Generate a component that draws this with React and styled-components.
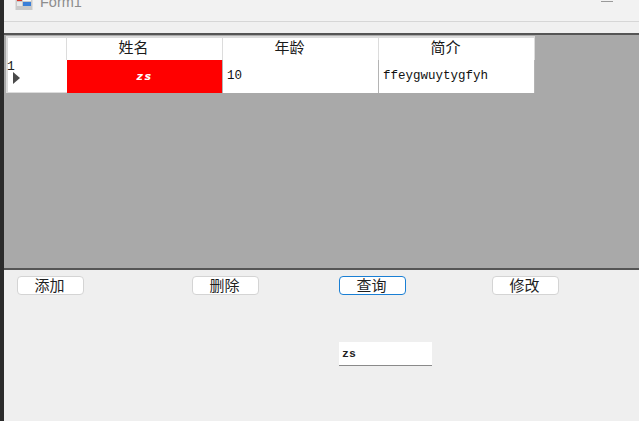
import styled, { createGlobalStyle } from "styled-components";

const GlobalStyle = createGlobalStyle`
  html, body {
    margin: 0;
    padding: 0;
    height: 100%;
    overflow: hidden;
    background: #efefef;
  }
`;

const cjk = `"Noto Sans CJK SC", "Liberation Sans", sans-serif`;
const mono = `"Liberation Mono", "DejaVu Sans Mono", monospace`;

const Desktop = styled.div`
  display: flex;
  width: 639px;
  height: 421px;
  overflow: hidden;
`;

const Edge = styled.div`
  width: 4px;
  background: #2b2b2b;
  flex-shrink: 0;
`;

const Window = styled.div`
  flex: 1;
  display: flex;
  flex-direction: column;
  min-width: 0;
`;

const TitleBar = styled.div`
  height: 21px;
  flex-shrink: 0;
  background: #f2f2f2;
  border-bottom: 1px solid #d6d6d6;
  display: flex;
  justify-content: space-between;
  align-items: flex-start;
  overflow: hidden;
`;

const TitleLeft = styled.div`
  display: flex;
  align-items: flex-end;
  height: 10px;
  padding-left: 11px;
  gap: 7px;
`;

const TitleText = styled.span`
  font: 14.5px "Liberation Sans", Arial, sans-serif;
  line-height: 16px;
  color: #8d8d8d;
  flex-shrink: 0;
`;

const Minimize = styled.div`
  width: 12px;
  height: 1px;
  background: #9a9a9a;
  margin: 1px 26px 0 0;
`;

const MenuBand = styled.div`
  height: 11px;
  flex-shrink: 0;
  background: #f0f0f0;
`;

const GridPanel = styled.div`
  height: 232px;
  flex-shrink: 0;
  background: #a9a9a9;
  border-top: 2px solid #555;
  border-bottom: 2px solid #555;
  padding: 1px 0 0 2px;
  box-sizing: content-box;
`;

const Table = styled.div`
  display: grid;
  grid-template-columns: 61px 156px 156px 156px;
  grid-template-rows: 24px 33px;
  width: 529px;
`;

const HeadCell = styled.div`
  background: #fff;
  border-top: 2px solid #dcdcdc;
  border-right: 1px solid #dcdcdc;
  border-left: ${(p) => (p.$first ? "2px solid #dcdcdc" : "none")};
  box-sizing: border-box;
  padding-right: ${(p) => (p.$first ? "0" : "22px")};
  font: 15px/18px ${cjk};
  color: #1a1a1a;
  text-align: center;
`;

const HeadGroup = styled.div`
  grid-column: span 2;
  display: grid;
  grid-template-columns: 61px 156px;
`;

const RowHead = styled.div`
  background: #fff;
  position: relative;
  border-left: 2px solid #dcdcdc;
  border-bottom: 1px solid #dcdcdc;
  box-sizing: border-box;
  font: 13px/14px ${mono};
  color: #222;
`;

const RowIndex = styled.span`
  position: absolute;
  left: -1px;
  top: 0;
`;

const RowArrow = styled.svg`
  position: absolute;
  left: 5px;
  top: 12px;
`;

const Cell = styled.div`
  background: ${(p) => (p.$selected ? "#ff0000" : "#fff")};
  border-right: 1px solid #b4b4b4;
  box-sizing: border-box;
  display: flex;
  align-items: center;
  justify-content: ${(p) => (p.$selected ? "center" : "flex-start")};
  padding: 0 0 1px ${(p) => (p.$selected ? "0" : "4px")};
  font: ${(p) =>
    p.$selected
      ? `italic bold 11px "DejaVu Sans", sans-serif`
      : `12.5px "Liberation Mono", monospace`};
  letter-spacing: ${(p) => (p.$selected ? "1.5px" : "0")};
  color: ${(p) => (p.$selected ? "#fff" : "#111")};
`;

const ButtonRow = styled.div`
  display: flex;
  padding: 6px 0 0 13px;
`;

const ActionButton = styled.button`
  width: 67px;
  height: 19px;
  margin-left: ${(p) => p.$offset || 0}px;
  padding: 0 2px 2px 0;
  background: #fff;
  border: ${(p) => (p.$focused ? "1.5px solid #1a7fd4" : "1px solid #d4d4d4")};
  border-radius: 4px;
  box-sizing: border-box;
  font: 15px/15px ${cjk};
  color: #1f1f1f;
`;

const SearchRow = styled.div`
  padding: 47px 0 0 335px;
`;

const SearchBox = styled.input`
  display: block;
  width: 93px;
  height: 24px;
  padding: 0 0 0 3px;
  background: #fff;
  border: none;
  border-bottom: 1px solid #8a8a8a;
  box-sizing: border-box;
  font: bold 11.5px ${mono};
  color: #222;
  outline: none;
`;

const FormIcon = () => (
  <svg width="18" height="18" viewBox="0 0 18 18" style={{ flexShrink: 0 }}>
    <rect x="0.5" y="0" width="17" height="18" fill="#c9c9c9" />
    <rect x="2" y="0" width="5" height="9" fill="#d8352a" />
    <rect x="8" y="0" width="8" height="4" fill="#e8b63a" />
    <rect x="8" y="5" width="8" height="4" fill="#f5f5f5" />
    <rect x="2" y="10" width="5" height="4" fill="#e9e9e9" />
    <rect x="8" y="10" width="8" height="4" fill="#3a7fd8" />
  </svg>
);

const headers = ["年龄", "简介"];
const actions = [
  { label: "添加", offset: 0 },
  { label: "删除", offset: 108 },
  { label: "查询", offset: 80, focused: true },
  { label: "修改", offset: 86 },
];

const App = () => (
  <>
    <GlobalStyle />
    <Desktop>
      <Edge />
      <Window>
        <TitleBar>
          <TitleLeft>
            <FormIcon />
            <TitleText>Form1</TitleText>
          </TitleLeft>
          <Minimize />
        </TitleBar>
        <MenuBand />
        <GridPanel>
          <Table>
            <HeadGroup>
              <HeadCell $first />
              <HeadCell>姓名</HeadCell>
            </HeadGroup>
            {headers.map((h) => (
              <HeadCell key={h}>{h}</HeadCell>
            ))}
            <RowHead>
              <RowIndex>1</RowIndex>
              <RowArrow width="8" height="12" viewBox="0 0 8 12">
                <path d="M0 0 L7 6 L0 12 Z" fill="#4a4a4a" />
              </RowArrow>
            </RowHead>
            <Cell $selected>zs</Cell>
            <Cell>10</Cell>
            <Cell>ffeygwuytygfyh</Cell>
          </Table>
        </GridPanel>
        <ButtonRow>
          {actions.map((a) => (
            <ActionButton key={a.label} $offset={a.offset} $focused={a.focused}>
              {a.label}
            </ActionButton>
          ))}
        </ButtonRow>
        <SearchRow>
          <SearchBox defaultValue="zs" />
        </SearchRow>
      </Window>
    </Desktop>
  </>
);

export default App;
